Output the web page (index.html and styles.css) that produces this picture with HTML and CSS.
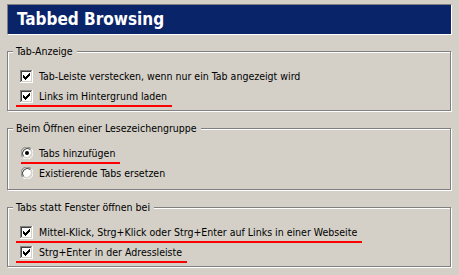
FILE: index.html
```html
<!DOCTYPE html>
<html lang="de">
<head>
    <meta charset="UTF-8">
    <title>Tabbed Browsing</title>
    <link rel="stylesheet" href="styles.css">
</head>
<body>
    <div class="panel">
        <div class="banner">Tabbed Browsing</div>

        <!-- Tab-Anzeige -->
        <div class="group">
            <span class="legend">Tab-Anzeige</span>
            <div class="row">
                <svg class="check" viewBox="0 0 13 13"><use href="#cb"/></svg>
                <span>Tab-Leiste verstecken, wenn nur ein Tab angezeigt wird</span>
            </div>
            <div class="row marked">
                <svg class="check" viewBox="0 0 13 13"><use href="#cb"/></svg>
                <span>Links im Hintergrund laden</span>
            </div>
        </div>

        <!-- Lesezeichengruppe -->
        <div class="group tall">
            <span class="legend">Beim Öffnen einer Lesezeichengruppe</span>
            <div class="row marked radio-row">
                <svg class="radio" viewBox="0 0 12 12"><use href="#rb"/><circle cx="6" cy="6" r="2" fill="#000"/></svg>
                <span>Tabs hinzufügen</span>
            </div>
            <div class="row">
                <svg class="radio" viewBox="0 0 12 12"><use href="#rb"/></svg>
                <span>Existierende Tabs ersetzen</span>
            </div>
        </div>

        <!-- Tabs statt Fenster -->
        <div class="group">
            <span class="legend">Tabs statt Fenster öffnen bei</span>
            <div class="row marked">
                <svg class="check" viewBox="0 0 13 13"><use href="#cb"/></svg>
                <span>Mittel-Klick, Strg+Klick oder Strg+Enter auf Links in einer Webseite</span>
            </div>
            <div class="row marked">
                <svg class="check" viewBox="0 0 13 13"><use href="#cb"/></svg>
                <span>Strg+Enter in der Adressleiste</span>
            </div>
        </div>
    </div>

    <svg class="defs" width="0" height="0">
        <defs>
            <g id="cb" shape-rendering="crispEdges">
                <rect x="0" y="0" width="13" height="13" fill="#fff"/>
                <rect x="0" y="0" width="12" height="12" fill="#808080"/>
                <rect x="1" y="1" width="11" height="11" fill="#d4d0c8"/>
                <rect x="1" y="1" width="10" height="10" fill="#404040"/>
                <rect x="2" y="2" width="9" height="9" fill="#fff"/>
                <path fill="#000" d="M9 3h1v1h-1zM8 4h2v1h-2zM3 5h1v1h-1zM7 5h3v1h-3zM3 6h2v1h-2zM6 6h3v1h-3zM3 7h5v1h-5zM4 8h3v1h-3zM5 9h1v1h-1z"/>
            </g>
            <g id="rb">
                <path d="M1.7 10.3A6 6 0 0 1 10.3 1.7" fill="none" stroke="#808080" stroke-width="1"/>
                <path d="M10.3 1.7A6 6 0 0 1 1.7 10.3" fill="none" stroke="#fff" stroke-width="1"/>
                <circle cx="6" cy="6" r="4.5" fill="#fff"/>
                <path d="M2.5 9.5A5 5 0 0 1 9.5 2.5" fill="none" stroke="#404040" stroke-width="1"/>
                <path d="M9.5 2.5A5 5 0 0 1 2.5 9.5" fill="none" stroke="#d4d0c8" stroke-width="1"/>
            </g>
        </defs>
    </svg>
</body>
</html>
```

FILE: styles.css
```css
* {
    margin: 0;
    padding: 0;
    box-sizing: border-box;
}
body, html {
    height: 100%;
}
body {
    background-color: #d4d0c8;
    font-family: "DejaVu Sans Condensed", "DejaVu Sans", sans-serif;
    font-size: 10.5px;
    color: #000;
}
.panel {
    display: flex;
    flex-direction: column;
    gap: 17px;
    width: 445px;
    margin-left: 7px;
    padding-top: 4px;
}
/* Titelbalken */
.banner {
    height: 31px;
    margin-bottom: -1px;
    padding-left: 9px;
    line-height: 29px;
    color: #fff;
    background-color: #0a246a;
    border: 1px solid;
    border-color: #808080 #fff #fff #808080;
    font-size: 17px;
    font-weight: bold;
}
/* Gruppen */
.group {
    position: relative;
    width: 444px;
    padding: 14px 0 4px 12px;
    border: 1px solid #808080;
    box-shadow: 1px 1px 0 #fff, inset 1px 1px 0 #fff;
}
.group.tall {
    padding-bottom: 6px;
}
.legend {
    position: absolute;
    top: -7px;
    left: 5px;
    padding: 0 4px 0 3px;
    line-height: 13px;
    background-color: #d4d0c8;
}
.row {
    position: relative;
    display: flex;
    align-items: center;
    gap: 6px;
    height: 20px;
    width: max-content;
}
.check {
    width: 13px;
    height: 13px;
}
.radio {
    width: 12px;
    height: 12px;
    margin-left: 1px;
}
.defs {
    position: absolute;
}
/* rote Markierung */
.marked::after {
    content: "";
    position: absolute;
    left: -4px;
    right: -5px;
    top: 19px;
    height: 2px;
    background-color: #ff0000;
}
.radio-row::after {
    left: 1px;
}
```
